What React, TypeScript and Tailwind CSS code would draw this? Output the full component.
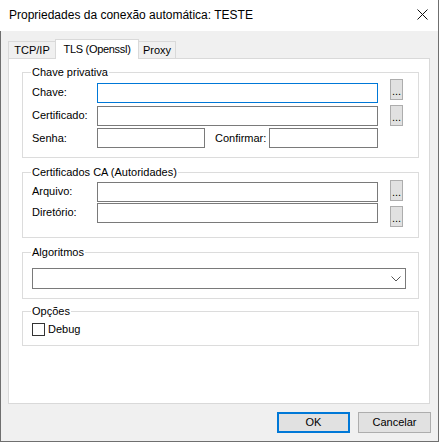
import React from 'react';

const font = "font-['Liberation_Sans',Arial,sans-serif]";

// Group box with its caption sitting on the top border
const Group = ({ title, className, children }: { title: string; className: string; children: React.ReactNode }) => (
  <div className={`relative border border-[#dcdcdc] ${className}`}>
    <span className="absolute -top-[7px] left-[8px] bg-white px-[1px] text-[11px] leading-[13px] text-black">{title}</span>
    {children}
  </div>
);

const Input = ({ w, focused }: { w: string; focused?: boolean }) => (
  <div className={`${w} h-[20px] shrink-0 border bg-white ${focused ? 'border-[#0078d7]' : 'border-[#7a7a7a]'}`} />
);

const Browse = ({ className }: { className?: string }) => (
  <button className={`w-[13px] h-[21px] shrink-0 border border-[#adadad] bg-[#e1e1e1] text-[11px] leading-[11px] pt-[6px] flex justify-center text-black ${className ?? ''}`}>
    ...
  </button>
);

export default function App() {
  return (
    <div className={`w-[439px] h-[442px] flex flex-col bg-[#f0f0f0] border-r border-b border-[#6f6f6f] ${font} text-black`}>
      {/* Title bar */}
      <div className="h-[31px] shrink-0 bg-white flex items-center pl-[9px] pr-[10px]">
        <span className="text-[12px] leading-[14px] -mt-[1px] flex-1">Propriedades da conexão automática: TESTE</span>
        <svg width="11" height="11" viewBox="0 0 11 11" className="-mt-[2px]">
          <path d="M0.5 0.5 L10.5 10.5 M10.5 0.5 L0.5 10.5" stroke="#111" strokeWidth="1" />
        </svg>
      </div>

      <div className="flex-1 flex flex-col border-l border-[#6f6f6f] pl-[7px] pr-[8px] pt-[8px]">
        {/* Tabs */}
        <div className="flex items-end h-[19px] text-[11px] leading-[13px]">
          <div className="w-[47px] h-[17px] border border-b-0 border-r-0 border-[#d9d9d9] bg-[#f0f0f0] flex items-center justify-center pt-[1px]">TCP/IP</div>
          <div className="relative z-10 -mb-px w-[84px] h-[20px] border border-b-0 border-[#d9d9d9] bg-white flex items-center justify-center tracking-[-0.3px]">TLS (Openssl)</div>
          <div className="w-[37px] h-[17px] border border-b-0 border-l-0 border-[#d9d9d9] bg-[#f0f0f0] flex items-center justify-center pt-[1px]">Proxy</div>
        </div>

        {/* Tab page */}
        <div className="h-[346px] border border-[#d9d9d9] bg-white pl-[13px] pt-[13px] text-[11px] leading-[13px]">
          <Group title="Chave privativa" className="w-[397px] pl-[9px] pt-[6px] pb-[9px]">
            <div className="flex items-start">
              <span className="w-[65px] mt-[7px]">Chave:</span>
              <div className="mt-[4px]"><Input w="w-[281px]" focused /></div>
              <Browse className="ml-[12px]" />
            </div>
            <div className="flex items-start mt-[2px]">
              <span className="w-[65px] mt-[4px]">Certificado:</span>
              <div className="mt-[1px]"><Input w="w-[281px]" /></div>
              <Browse className="ml-[12px]" />
            </div>
            <div className="flex items-center mt-[2px]">
              <span className="w-[65px]">Senha:</span>
              <Input w="w-[108px]" />
              <span className="ml-[10px] w-[54px]">Confirmar:</span>
              <Input w="w-[109px]" />
            </div>
          </Group>

          <Group title="Certificados CA (Autoridades)" className="w-[397px] mt-[14px] pl-[9px] pt-[7px] pb-[10px]">
            <div className="flex items-start">
              <span className="w-[65px] mt-[5px]">Arquivo:</span>
              <div className="mt-[2px]"><Input w="w-[281px]" /></div>
              <Browse className="ml-[12px]" />
            </div>
            <div className="flex items-start mt-[1px]">
              <span className="w-[65px] mt-[3px]">Diretório:</span>
              <Input w="w-[281px]" />
              <Browse className="ml-[12px] mt-[3px]" />
            </div>
          </Group>

          <Group title="Algoritmos" className="w-[397px] mt-[14px] pl-[9px] pt-[15px] pb-[9px]">
            <div className="w-[374px] h-[21px] border border-[#7a7a7a] bg-white flex items-center justify-end pr-[4px]">
              <svg width="10" height="6" viewBox="0 0 10 6">
                <path d="M0.5 0.5 L5 5 L9.5 0.5" fill="none" stroke="#555" strokeWidth="1" />
              </svg>
            </div>
          </Group>

          <Group title="Opções" className="w-[397px] mt-[12px] pl-[9px] pt-[11px] pb-[9px]">
            <label className="flex items-center gap-[3px]">
              <span className="w-[13px] h-[13px] border border-[#333] bg-white" />
              <span>Debug</span>
            </label>
          </Group>
        </div>

        {/* Dialog buttons */}
        <div className="flex justify-end gap-[8px] mt-[8px] -mr-[1px] text-[11px]">
          <button className="w-[73px] h-[21px] border-2 border-[#0078d7] bg-[#e1e1e1]">OK</button>
          <button className="w-[73px] h-[21px] border border-[#adadad] bg-[#e1e1e1]">Cancelar</button>
        </div>
      </div>
    </div>
  );
}
